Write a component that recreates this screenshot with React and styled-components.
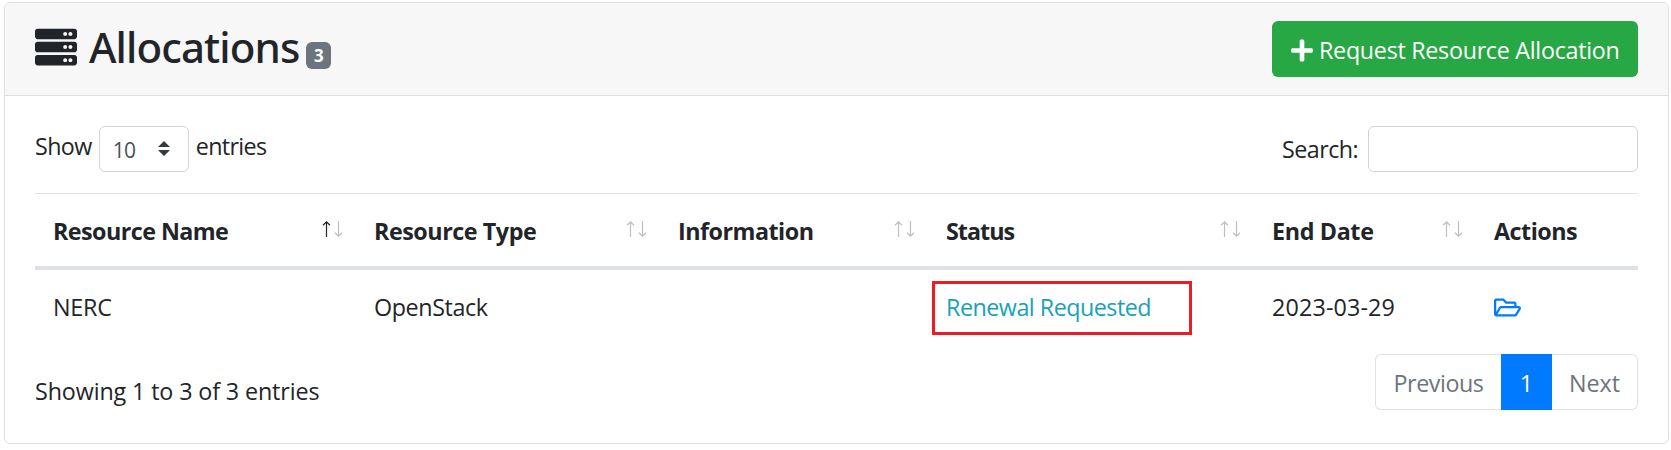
import React from "react";
import styled, { createGlobalStyle } from "styled-components";
import { FaServer, FaPlus, FaRegFolderOpen } from "react-icons/fa";

const GlobalStyle = createGlobalStyle`
  *, *::before, *::after { box-sizing: border-box; }
  body {
    margin: 0;
    background: #fff;
    color: #212529;
    font-family: "Open Sans", "Noto Sans", sans-serif;
    font-size: 23.3px;
    line-height: 36px;
    white-space: nowrap;
  }
`;

const Card = styled.section`
  width: 1665px;
  height: 442px;
  margin: 2px 0 0 4px;
  border: 1px solid #dfdfdf;
  border-radius: 6px;
  overflow: hidden;
`;

const CardHeader = styled.header`
  display: flex;
  justify-content: space-between;
  align-items: flex-start;
  height: 93px;
  padding: 18px 30px 0;
  background: #f7f7f7;
  border-bottom: 1px solid #dfdfdf;
`;

const CardBody = styled.div`
  padding: 30px 30px 0;
`;

const Label = styled.span`
  letter-spacing: ${(p) => p.$track || 0}px;
`;

const Title = styled.h2`
  display: flex;
  margin: 0;
  height: 52px;
  align-items: center;
  font: 500 42px/52px "Noto Sans", sans-serif;
  letter-spacing: -0.9px;

  svg {
    display: block;
    margin: 0 12px 0 0;
    width: 42px;
    height: 42px;
  }
`;

const Badge = styled.span`
  width: 25px;
  height: 27px;
  margin: 17px 0 0 7px;
  border-radius: 6px;
  background: #6c757d;
  color: #fff;
  font: 700 17px/27px "Open Sans", sans-serif;
  letter-spacing: 0;
  text-align: center;
`;

const RequestButton = styled.button`
  display: flex;
  align-items: center;
  width: 366px;
  height: 56px;
  padding: 2px 0 0 19px;
  border: 0;
  border-radius: 6px;
  background: #28a745;
  color: #fff;
  font: inherit;

  svg {
    width: 22px;
    height: 25px;
    margin: 0 6px 0 0;
  }
`;

const Controls = styled.div`
  display: flex;
  justify-content: space-between;
  height: 67px;
`;

const LengthControl = styled.div`
  display: flex;
  align-items: flex-start;

  > ${Label} { margin-top: 2px; }
`;

const LengthSelect = styled.div`
  display: flex;
  align-items: center;
  justify-content: space-between;
  width: 90px;
  height: 46px;
  margin: 0 7px 0 7px;
  padding: 1px 18px 0 13px;
  border: 1px solid #ced4da;
  border-radius: 6px;
  color: #495057;
  font-size: 21px;

  svg { margin-bottom: 2px; }
`;

const SearchControl = styled.label`
  display: flex;
  align-items: center;
  height: 46px;
  gap: 10px;
`;

const SearchInput = styled.input`
  width: 270px;
  height: 46px;
  border: 1px solid #ced4da;
  border-radius: 6px;
  background: #fff;
`;

const Row = styled.div`
  display: grid;
  grid-template-columns: 321px 304px 268px 326px 222px 162px;
`;

const HeadRow = styled(Row)`
  height: 77px;
  border-top: 1px solid #dee2e6;
  border-bottom: 4px solid #dee2e6;
  font-weight: 700;
`;

const HeadCell = styled.div`
  display: flex;
  align-items: center;
  justify-content: space-between;
  padding: 2px 14px 0 18px;

  svg { margin-bottom: 4px; }
`;

const BodyRow = styled(Row)`
  height: 74px;
`;

const Cell = styled.div`
  position: relative;
  display: flex;
  align-items: center;
  padding-left: 18px;
  color: ${(p) => p.$color || "inherit"};
`;

const Highlight = styled.span`
  position: absolute;
  left: 4px;
  top: 11px;
  width: 260px;
  height: 54px;
  border: 3px solid #ed1c24;
`;

const Footer = styled.footer`
  display: flex;
  justify-content: space-between;
  align-items: flex-start;
  padding-top: 10px;

  > ${Label} { margin-top: 19px; }
`;

const Pagination = styled.nav`
  display: flex;
  height: 56px;
  border-radius: 6px;
`;

const PageItem = styled.span`
  display: flex;
  align-items: center;
  justify-content: center;
  width: ${(p) => p.$width}px;
  padding-top: 2px;
  border: 1px solid ${(p) => (p.$active ? "#007bff" : "#dee2e6")};
  background: ${(p) => (p.$active ? "#007bff" : "#fff")};
  color: ${(p) => (p.$active ? "#fff" : "#6c757d")};

  &:first-child { border-right: 0; border-radius: 6px 0 0 6px; }
  &:last-child { border-left: 0; border-radius: 0 6px 6px 0; }
`;

const SortArrows = ({ ascending }) => (
  <svg width="20" height="16" viewBox="0 0 20 16" fill="none" strokeWidth="1.2">
    <path d="M4.5 16V1M1 4.3L4.5 .9L8 4.3" stroke={ascending ? "#212529" : "#bdbebf"} />
    <path d="M16.5 0V15M13 11.7L16.5 15.1L20 11.7" stroke="#bdbebf" />
  </svg>
);

const SelectCaret = () => (
  <svg width="12" height="15" viewBox="0 0 12 15" fill="#343a40">
    <path d="M0 6L6 0L12 6ZM0 9L6 15L12 9Z" />
  </svg>
);

const columns = [
  { name: "Resource Name", track: -0.55, sortable: true, ascending: true },
  { name: "Resource Type", track: -0.45, sortable: true },
  { name: "Information", track: -0.5, sortable: true },
  { name: "Status", track: -1, sortable: true },
  { name: "End Date", track: -0.35, sortable: true },
  { name: "Actions", track: -0.5 },
];

export default function App() {
  return (
    <>
      <GlobalStyle />
      <Card>
        <CardHeader>
          <Title>
            <FaServer />
            Allocations
            <Badge>3</Badge>
          </Title>
          <RequestButton>
            <FaPlus />
            <Label $track={-0.29}>Request Resource Allocation</Label>
          </RequestButton>
        </CardHeader>
        <CardBody>
          <Controls>
            <LengthControl>
              <Label $track={-0.6}>Show</Label>
              <LengthSelect>
                <Label $track={-0.8}>10</Label>
                <SelectCaret />
              </LengthSelect>
              <Label $track={-0.65}>entries</Label>
            </LengthControl>
            <SearchControl>
              <Label $track={-0.57}>Search:</Label>
              <SearchInput />
            </SearchControl>
          </Controls>
          <HeadRow>
            {columns.map((c) => (
              <HeadCell key={c.name}>
                <Label $track={c.track}>{c.name}</Label>
                {c.sortable && <SortArrows ascending={c.ascending} />}
              </HeadCell>
            ))}
          </HeadRow>
          <BodyRow>
            <Cell><Label $track={-0.2}>NERC</Label></Cell>
            <Cell><Label $track={-0.4}>OpenStack</Label></Cell>
            <Cell />
            <Cell $color="#17a2b8">
              <Label $track={-0.5}>Renewal Requested</Label>
              <Highlight />
            </Cell>
            <Cell><Label $track={0.15}>2023-03-29</Label></Cell>
            <Cell $color="#007bff"><FaRegFolderOpen size={27} /></Cell>
          </BodyRow>
          <Footer>
            <Label $track={-0.12}>Showing 1 to 3 of 3 entries</Label>
            <Pagination>
              <PageItem $width={126}><Label $track={-0.45}>Previous</Label></PageItem>
              <PageItem $width={51} $active>1</PageItem>
              <PageItem $width={86}>Next</PageItem>
            </Pagination>
          </Footer>
        </CardBody>
      </Card>
    </>
  );
}
